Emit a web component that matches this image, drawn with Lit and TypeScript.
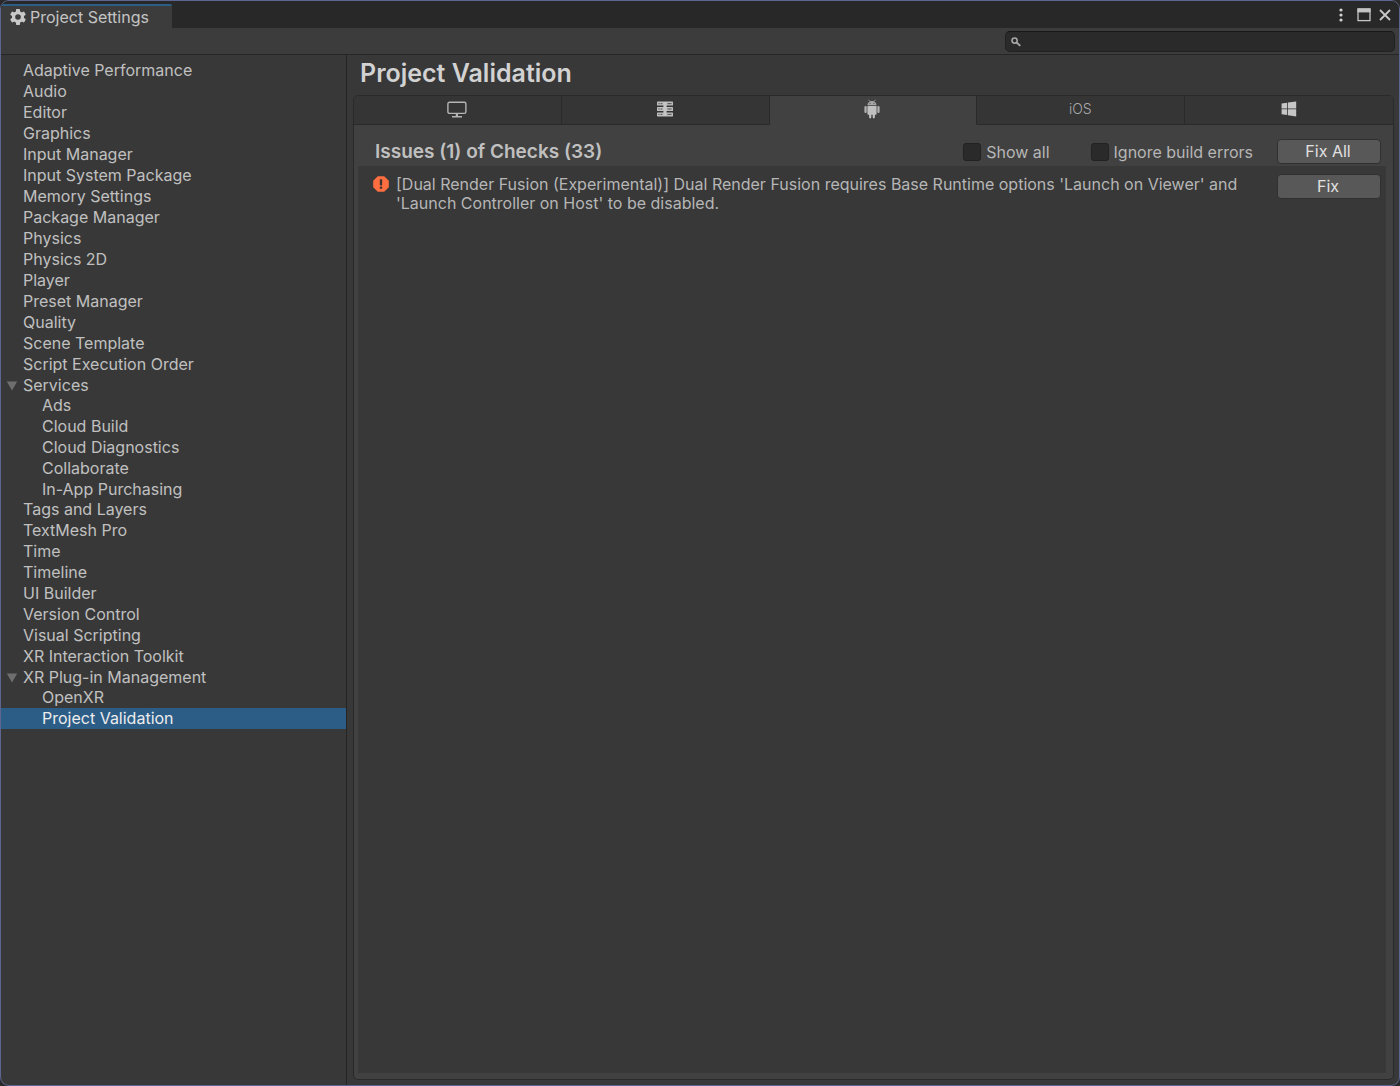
import { LitElement, html, css, svg, nothing, type TemplateResult } from "lit";
import { customElement, state } from "lit/decorators.js";
import { classMap } from "lit/directives/class-map.js";

interface NavItem {
  label: string;
  children?: string[];
}

const NAV: NavItem[] = [
  { label: "Adaptive Performance" },
  { label: "Audio" },
  { label: "Editor" },
  { label: "Graphics" },
  { label: "Input Manager" },
  { label: "Input System Package" },
  { label: "Memory Settings" },
  { label: "Package Manager" },
  { label: "Physics" },
  { label: "Physics 2D" },
  { label: "Player" },
  { label: "Preset Manager" },
  { label: "Quality" },
  { label: "Scene Template" },
  { label: "Script Execution Order" },
  {
    label: "Services",
    children: ["Ads", "Cloud Build", "Cloud Diagnostics", "Collaborate", "In-App Purchasing"],
  },
  { label: "Tags and Layers" },
  { label: "TextMesh Pro" },
  { label: "Time" },
  { label: "Timeline" },
  { label: "UI Builder" },
  { label: "Version Control" },
  { label: "Visual Scripting" },
  { label: "XR Interaction Toolkit" },
  { label: "XR Plug-in Management", children: ["OpenXR", "Project Validation"] },
];

const gearIcon = html`<svg width="16" height="16" viewBox="0 0 16 16" aria-hidden="true">
  <g fill="#c8c8c8">
    ${[0, 60, 120].map(
      (a) => svg`<rect x="6" y="0" width="4" height="16" rx="0.8" transform="rotate(${a} 8 8)"></rect>`
    )}
  </g>
  <circle cx="8" cy="8" r="4.5" fill="none" stroke="#c8c8c8" stroke-width="3.2"></circle>
  <circle cx="8" cy="8" r="2.8" fill="#3c3c3c"></circle>
</svg>`;

const moreIcon = html`<svg width="6" height="14" viewBox="0 0 6 14" aria-hidden="true" fill="#d2d2d2">
  <circle cx="3" cy="2" r="1.6"></circle>
  <circle cx="3" cy="7" r="1.6"></circle>
  <circle cx="3" cy="12" r="1.6"></circle>
</svg>`;

const maximizeIcon = html`<svg width="14" height="14" viewBox="0 0 14 14" aria-hidden="true">
  <rect x="1" y="1" width="12" height="11.6" fill="none" stroke="#c4c4c4" stroke-width="1.3"></rect>
  <rect x="0.4" y="0.4" width="13.2" height="4" fill="#c4c4c4"></rect>
</svg>`;

const closeIcon = html`<svg width="12" height="12" viewBox="0 0 12 12" aria-hidden="true">
  <path d="M1 1l10 10M11 1L1 11" stroke="#c8c8c8" stroke-width="1.8"></path>
</svg>`;

const searchIcon = html`<svg width="10" height="10" viewBox="0 0 10 10" aria-hidden="true">
  <circle cx="3.6" cy="3.6" r="2.6" fill="none" stroke="#a8a8a8" stroke-width="1.6"></circle>
  <path d="M5.5 5.5l3.8 3.4" stroke="#a8a8a8" stroke-width="1.9"></path>
</svg>`;

const desktopIcon = html`<svg width="20" height="17" viewBox="0 0 20 17" aria-hidden="true">
  <rect x="0.9" y="1.2" width="18" height="11.2" rx="1.6" fill="none" stroke="#b4b4b4" stroke-width="1.4"></rect>
  <path d="M9.9 12.4v3" stroke="#b4b4b4" stroke-width="2.2"></path>
  <path d="M5 15.8h10" stroke="#b4b4b4" stroke-width="1.4"></path>
</svg>`;

const serverIcon = html`<svg width="16" height="16" viewBox="0 0 16 16" aria-hidden="true">
  <g fill="#bebebe">
    ${[0.6, 6, 11.4].map((y) => svg`<rect x="0" y=${y} width="16" height="4" rx="0.6"></rect>`)}
  </g>
  <g fill="#626262">
    ${[2, 7.4, 12.8].map(
      (y) => svg`<rect x="1.4" y=${y} width="1.3" height="1.2"></rect>
        <rect x="3.6" y=${y} width="1.8" height="1.2"></rect>
        <rect x="10.4" y=${y} width="4.2" height="1.2"></rect>`
    )}
  </g>
  <rect x="6.4" y="1" width="3.2" height="14" fill="#c6c6c6"></rect>
</svg>`;

const androidIcon = html`<svg width="16" height="20" viewBox="0 0 16 20" aria-hidden="true">
  <path d="M4.6 0.7l1.4 2M11.4 0.7l-1.4 2" stroke="#a0a0a0" stroke-width="0.8"></path>
  <path d="M3.4 6.3C3.6 3.6 5.4 1.9 8 1.9s4.4 1.7 4.6 4.4z" fill="#a8a8a8"></path>
  <circle cx="6" cy="4.3" r="0.6" fill="#555"></circle>
  <circle cx="10" cy="4.3" r="0.6" fill="#555"></circle>
  <path
    d="M3.4 7h9.2v7.8a1 1 0 0 1-1 1h-.7v2.5a1.1 1.1 0 0 1-2.2 0v-2.5H7.3v2.5a1.1 1.1 0 0 1-2.2 0v-2.5h-.7a1 1 0 0 1-1-1z"
    fill="#c0c0c0"
  ></path>
  <rect x="0.4" y="7" width="2.3" height="7" rx="1.1" fill="#b0b0b0"></rect>
  <rect x="13.3" y="7" width="2.3" height="7" rx="1.1" fill="#b0b0b0"></rect>
</svg>`;

const windowsIcon = html`<svg width="16" height="16" viewBox="0 0 16 16" aria-hidden="true" fill="#c6c6c6">
  <path d="M0.6 2.6L6.2 1.8V7.4H0.6z"></path>
  <path d="M7 1.6L15.2 0.4V7.4H7z"></path>
  <path d="M0.6 8.3H6.2V14.1L0.6 13.3z"></path>
  <path d="M7 8.3H15.2V15.6L7 14.3z"></path>
</svg>`;

const errorIcon = html`<svg width="16" height="16" viewBox="0 0 16 16" role="img" aria-label="Error">
  <path d="M4.8 0.2h6.4l4.6 4.6v6.4l-4.6 4.6H4.8L0.2 11.2V4.8z" fill="#ff6e40"></path>
  <rect x="6.8" y="3.2" width="2.4" height="6.2" rx="0.6" fill="#3c3430"></rect>
  <rect x="6.8" y="10.6" width="2.4" height="2.2" rx="0.6" fill="#3c3430"></rect>
</svg>`;

const PLATFORMS: { name: string; icon: TemplateResult }[] = [
  { name: "Standalone", icon: desktopIcon },
  { name: "Dedicated Server", icon: serverIcon },
  { name: "Android", icon: androidIcon },
  { name: "iOS", icon: html`<span class="ios">iOS</span>` },
  { name: "Windows", icon: windowsIcon },
];

@customElement("settings-nav")
class SettingsNav extends LitElement {
  @state() private selected = "Project Validation";
  @state() private closed = new Set<string>();

  static styles = css`
    :host {
      display: block;
      padding-top: 5px;
    }
    ul {
      list-style: none;
      margin: 0;
      padding: 0;
    }
    .sub {
      margin: -1px 0;
    }
    .row {
      display: flex;
      align-items: center;
      height: 21px;
    }
    .fold {
      flex: none;
      display: grid;
      place-items: center;
      width: 22px;
      height: 21px;
      padding: 0;
      border: 0;
      background: none;
    }
    .fold.closed svg {
      transform: rotate(-90deg);
    }
    .link {
      flex: 1;
      padding-left: 22px;
      color: #c0c0c0;
      text-decoration: none;
      line-height: 21px;
      white-space: nowrap;
    }
    .fold + .link {
      padding-left: 0;
    }
    .sub .link {
      padding-left: 41px;
    }
    .selected {
      background: #2c5d87;
    }
    .selected .link {
      color: #ececec;
    }
  `;

  private pick(e: Event, label: string) {
    e.preventDefault();
    this.selected = label;
  }

  private toggle(label: string) {
    const next = new Set(this.closed);
    next.has(label) ? next.delete(label) : next.add(label);
    this.closed = next;
  }

  private row(label: string, foldable = false) {
    const isClosed = this.closed.has(label);
    return html`<div class=${classMap({ row: true, selected: this.selected === label })}>
      ${foldable
        ? html`<button
            class=${classMap({ fold: true, closed: isClosed })}
            aria-label="Toggle ${label}"
            aria-expanded=${String(!isClosed)}
            @click=${() => this.toggle(label)}
          >
            <svg width="12" height="10" viewBox="0 0 12 10"><path d="M0.8 0.5h10.4L6 9.5z" fill="#6e6e6e"></path></svg>
          </button>`
        : nothing}
      <a class="link" href="#" @click=${(e: Event) => this.pick(e, label)}>${label}</a>
    </div>`;
  }

  render() {
    return html`<nav aria-label="Settings categories">
      <ul>
        ${NAV.map(
          (n) => html`<li>
            ${this.row(n.label, !!n.children)}
            ${n.children && !this.closed.has(n.label)
              ? html`<ul class="sub">
                  ${n.children.map((c) => html`<li>${this.row(c)}</li>`)}
                </ul>`
              : nothing}
          </li>`
        )}
      </ul>
    </nav>`;
  }
}

@customElement("validation-panel")
class ValidationPanel extends LitElement {
  @state() private platform = "Android";

  static styles = css`
    :host {
      display: flex;
      flex-direction: column;
      padding: 0 5px 0 6px;
    }
    .title {
      margin: 0;
      padding: 0 7px;
      font-size: 25px;
      font-weight: 600;
      line-height: 36px;
      color: #d2d2d2;
    }
    .frame {
      flex: 1;
      display: flex;
      flex-direction: column;
      margin: 4px 0 5px;
      border: 1px solid #2a2a2a;
      border-radius: 5px;
      background: #414141;
      overflow: hidden;
    }
    .tabs {
      display: grid;
      grid-template-columns: repeat(5, 1fr);
    }
    .tab {
      display: grid;
      place-items: center;
      height: 29px;
      padding: 0 1px 2px 0;
      border: 0;
      border-right: 1px solid #2a2a2a;
      border-bottom: 1px solid #2a2a2a;
      background: #353535;
      color: #a8a8a8;
      font: inherit;
    }
    .tab:last-child {
      border-right: 0;
    }
    .tab.active {
      background: #414141;
      border-bottom-color: #414141;
    }
    .ios {
      font-size: 14px;
      font-weight: 300;
      line-height: 16px;
    }
    .head {
      display: flex;
      align-items: center;
      height: 41px;
      padding: 12px 12px 0 21px;
      box-sizing: border-box;
    }
    .count {
      flex: 1;
      margin: 0;
      font-size: 19px;
      font-weight: 600;
      line-height: 24px;
      color: #c0c0c0;
    }
    .check {
      display: flex;
      align-items: center;
      gap: 5px;
      margin-right: 41px;
    }
    .check + .check {
      margin-right: 24px;
    }
    .box {
      appearance: none;
      width: 18px;
      height: 18px;
      margin: 0;
      border: 1px solid #212121;
      border-radius: 3px;
      background: #2a2a2a;
    }
    .box:checked {
      background: #2c5d87;
    }
    .btn {
      flex: none;
      width: 104px;
      height: 25px;
      padding: 0 2px 1px 0;
      border: 1px solid #303030;
      border-radius: 4px;
      background: #585858;
      color: #e0e0e0;
      font: inherit;
      line-height: 20px;
    }
    .issues {
      flex: 1;
      margin: 0 7px 6px 4px;
      padding: 0;
      list-style: none;
      background: #383838;
    }
    .issue {
      display: flex;
      align-items: flex-start;
      padding: 8px 5px 8px 15px;
    }
    .issue svg {
      flex: none;
      margin: 2px 7px 0 0;
    }
    .text {
      flex: 1;
      margin: 1px 30px 0 0;
      line-height: 19px;
    }
  `;

  render() {
    return html`
      <h1 class="title">Project Validation</h1>
      <div class="frame">
        <div class="tabs" role="tablist" aria-label="Platform">
          ${PLATFORMS.map(
            (p) => html`<button
              class=${classMap({ tab: true, active: this.platform === p.name })}
              role="tab"
              aria-label=${p.name}
              aria-selected=${String(this.platform === p.name)}
              @click=${() => (this.platform = p.name)}
            >
              ${p.icon}
            </button>`
          )}
        </div>
        <div class="head">
          <h2 class="count">Issues (1) of Checks (33)</h2>
          <label class="check"><input class="box" type="checkbox" />Show all</label>
          <label class="check"><input class="box" type="checkbox" />Ignore build errors</label>
          <button class="btn">Fix All</button>
        </div>
        <ul class="issues">
          <li class="issue">
            ${errorIcon}
            <p class="text">
              [Dual Render Fusion (Experimental)] Dual Render Fusion requires Base Runtime options 'Launch on Viewer'
              and 'Launch Controller on Host' to be disabled.
            </p>
            <button class="btn">Fix</button>
          </li>
        </ul>
      </div>
    `;
  }
}

@customElement("app-root")
class AppRoot extends LitElement {
  static styles = css`
    :host {
      display: block;
      background: #2a2a2a;
      font-family: Inter, "Liberation Sans", sans-serif;
      font-size: 16px;
      color: #b6b6b6;
    }
    .window {
      display: flex;
      flex-direction: column;
      box-sizing: border-box;
      min-height: 100vh;
      border: 1px solid #5d6690;
      border-radius: 9px;
      background: #383838;
      overflow: hidden;
    }
    .titlebar {
      display: flex;
      align-items: flex-end;
      justify-content: space-between;
      height: 27px;
      background: #282828;
    }
    .tab {
      display: flex;
      align-items: center;
      gap: 4px;
      box-sizing: border-box;
      height: 24px;
      padding: 0 23px 0 9px;
      border-top: 2px solid #2c5d87;
      border-radius: 2px 2px 0 0;
      background: #3c3c3c;
      color: #c4c4c4;
      line-height: 20px;
    }
    .controls {
      display: flex;
      align-items: center;
      gap: 8px;
      height: 27px;
      padding-right: 8px;
    }
    .ctl {
      display: grid;
      place-items: center;
      padding: 0;
      border: 0;
      background: none;
    }
    .ctl:first-child {
      margin-right: 5px;
    }
    .toolbar {
      display: flex;
      justify-content: flex-end;
      align-items: center;
      height: 26px;
      padding-right: 4px;
      border-bottom: 1px solid #262626;
      background: #3c3c3c;
    }
    .search {
      display: flex;
      align-items: center;
      gap: 6px;
      box-sizing: border-box;
      width: 28%;
      height: 21px;
      padding: 2px 6px 0 5px;
      border: 1px solid #212121;
      border-top-color: #181818;
      border-radius: 5px;
      background: #2a2a2a;
    }
    .search svg {
      flex: none;
    }
    .field {
      flex: 1;
      min-width: 0;
      padding: 0;
      border: 0;
      outline: 0;
      background: none;
      color: #d2d2d2;
      font: inherit;
      font-size: 14px;
    }
    .body {
      flex: 1;
      display: flex;
    }
    .side {
      flex: none;
      width: 345px;
      border-right: 1px solid #242424;
    }
    .main {
      flex: 1;
      min-width: 0;
    }
  `;

  render() {
    return html`<div class="window">
      <header class="titlebar">
        <div class="tab">${gearIcon}<span>Project Settings</span></div>
        <div class="controls">
          <button class="ctl" aria-label="More options">${moreIcon}</button>
          <button class="ctl" aria-label="Maximize">${maximizeIcon}</button>
          <button class="ctl" aria-label="Close">${closeIcon}</button>
        </div>
      </header>
      <div class="toolbar">
        <label class="search">${searchIcon}<input class="field" type="text" aria-label="Search settings" /></label>
      </div>
      <div class="body">
        <settings-nav class="side"></settings-nav>
        <validation-panel class="main"></validation-panel>
      </div>
    </div>`;
  }
}
